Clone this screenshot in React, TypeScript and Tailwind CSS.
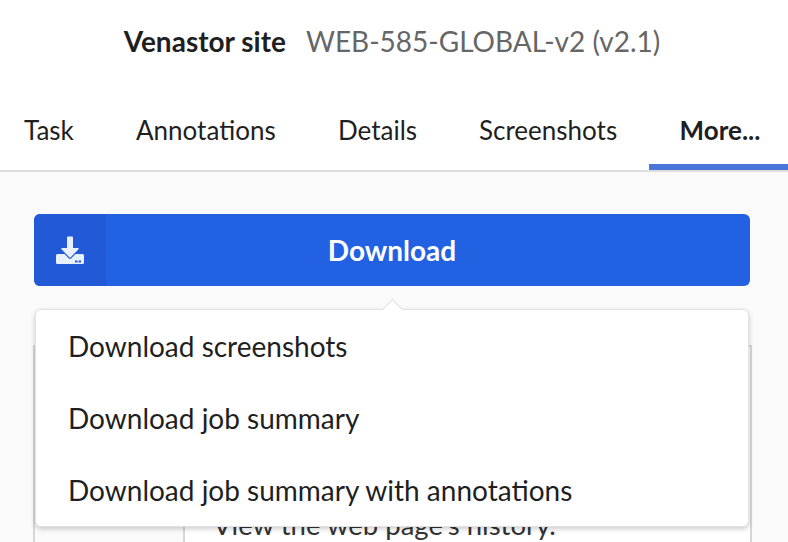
import React from 'react'

const tabs = [
  { label: 'Task', className: 'w-[136px] pl-[24px]' },
  { label: 'Annotations', className: 'w-[202px]' },
  { label: 'Details', className: 'w-[141px]' },
  { label: 'Screenshots', className: 'w-[170px]' },
]

const menuItems = ['Download screenshots', 'Download job summary', 'Download job summary with annotations']

function DownloadIcon() {
  return (
    <svg width="28" height="29" viewBox="0 0 28 29" className="block">
      <path d="M11 1.500a1 1 0 0 1 1-1h4a1 1 0 0 1 1 1V12h5c.7 0 1 .8.5 1.300l-7.800 8a1 1 0 0 1-1.400 0l-7.800-8C5 12.800 5.300 12 6 12h5z" fill="#e8effd" />
      <path d="M1.500 18H8.500l4.200 4.300a1.800 1.800 0 0 0 2.600 0L19.500 18h7a1.500 1.500 0 0 1 1.500 1.500v7a1.500 1.500 0 0 1-1.500 1.500h-25A1.500 1.500 0 0 1 0 26.500v-7A1.500 1.500 0 0 1 1.500 18z" fill="#e8effd" />
      <rect x="19" y="24.500" width="2.500" height="2" fill="#2a5ed8" />
      <rect x="22.500" y="24.500" width="2.500" height="2" fill="#2a5ed8" />
    </svg>
  )
}

export default function App() {
  return (
    <div className="relative w-[788px] h-[542px] overflow-hidden bg-white font-['Lato','Noto_Sans',sans-serif] text-[#1f1f1f]">
      <div className="flex h-[82px] items-center justify-center gap-[20px] pr-[4px] text-[28px]">
        <span className="font-bold">Venastor site</span>
        <span className="text-[#666666]">WEB-585-GLOBAL-v2 (v2.1)</span>
      </div>

      <div className="flex h-[90px] border-b-2 border-[#dddddd] text-[26px]">
        {tabs.map((tab) => (
          <div key={tab.label} className={`flex items-center pt-[8px] ${tab.className}`}>
            {tab.label}
          </div>
        ))}
        <div className="ml-auto flex w-[139px] items-center justify-center border-b-[6px] border-[#4a76d9] pl-[3px] pt-[14px] font-bold">
          More...
        </div>
      </div>

      <div className="h-[370px] bg-[#fafafa] pl-[34px] pr-[38px] pt-[42px]">
        <div className="flex h-[72px] overflow-hidden rounded-[6px] bg-[#2361e3] text-white">
          <div className="flex w-[72px] shrink-0 items-center justify-center bg-[#2159d6]">
            <DownloadIcon />
          </div>
          <div className="flex flex-1 items-center justify-center pr-[72px] text-[28px] font-bold">Download</div>
        </div>

        <div className="-ml-[1px] -mr-[2px] mt-[59px] flex h-[300px] border-2 border-[#d6d6d6] bg-white">
          <div className="w-[150px] border-r-2 border-[#d6d6d6] bg-[#fafafa]" />
          <div className="pl-[28px] pt-[157px] text-[27.5px] text-[#333333]">View the web page's history.</div>
        </div>
      </div>

      <div className="absolute left-[35px] top-[309px] w-[714px] rounded-[6px] border border-[#e2e2e2] bg-white pl-[32px] shadow-[0_2px_5px_rgba(0,0,0,0.2)]">
        {menuItems.map((item) => (
          <div key={item} className="flex h-[72px] items-center text-[28px]">
            {item}
          </div>
        ))}
        <div className="absolute -top-[8px] left-[349px] size-[15px] rotate-45 border-l border-t border-[#dedede] bg-white" />
      </div>
    </div>
  )
}
